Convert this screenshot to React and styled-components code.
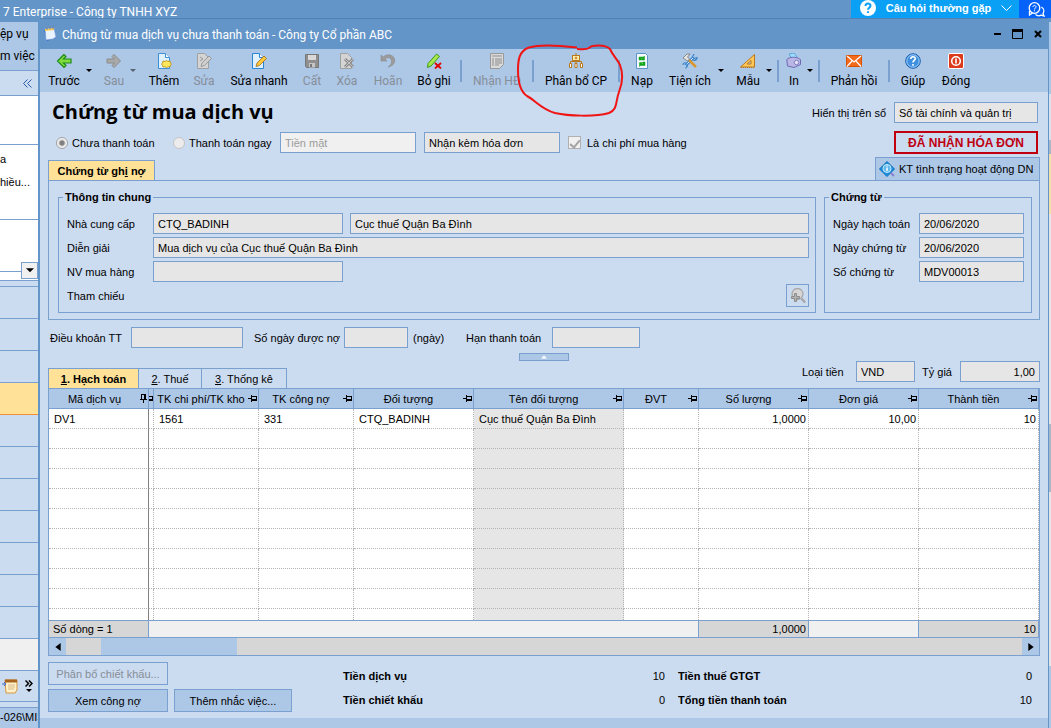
import styled, { createGlobalStyle, css, ThemeProvider } from "styled-components"

const theme = {
    colors: {
        window: "#6495c8",
        bar: "#adc7e7",
        panel: "#cbdbf0",
        line: "#7aa0cf",
        field: "#e6e6e6",
        active: "#ffe297",
        danger: "#c00010",
        muted: "#868e98",
    },
    fonts: {
        form: '"Liberation Sans", Arial, sans-serif',
        window: 'Roboto, "Open Sans", sans-serif',
        heading: '"Open Sans", "Noto Sans", sans-serif',
    },
}

const columns = [
    { title: "Mã dịch vụ", width: 100, value: "DV1", frozen: true },
    { title: "", width: 5, narrow: true },
    { title: "TK chi phí/TK kho", width: 105, value: "1561" },
    { title: "TK công nợ", width: 95, value: "331" },
    { title: "Đối tượng", width: 120, value: "CTQ_BADINH" },
    { title: "Tên đối tượng", value: "Cục thuế Quận Ba Đình", shaded: true },
    { title: "ĐVT", width: 75 },
    { title: "Số lượng", width: 110, value: "1,0000", numeric: true },
    { title: "Đơn giá", width: 110, value: "10,00", numeric: true },
    { title: "Thành tiền", width: 120, value: "10", numeric: true },
]

const tools = [
    { label: "Trước", icon: "back", width: 44, menu: true },
    { label: "Sau", icon: "forward", width: 32, menu: true, disabled: true },
    { label: "Thêm", icon: "add", width: 44 },
    { label: "Sửa", icon: "editOff", width: 36, disabled: true },
    { label: "Sửa nhanh", icon: "edit", width: 74 },
    { label: "Cất", icon: "save", width: 32, disabled: true },
    { label: "Xóa", icon: "remove", width: 38, disabled: true },
    { label: "Hoãn", icon: "undo", width: 44, disabled: true },
    { label: "Bỏ ghi", icon: "unpost", width: 48, separated: true },
    { label: "Nhận HĐ", icon: "invoice", width: 66, disabled: true, separated: true },
    { label: "Phân bổ CP", icon: "allocate", width: 80, marked: true, separated: true },
    { label: "Nạp", icon: "reload", width: 40 },
    { label: "Tiện ích", icon: "utils", width: 56, menu: true },
    { label: "Mẫu", icon: "template", width: 36, menu: true, separated: true },
    { label: "In", icon: "print", width: 26, menu: true, separated: true },
    { label: "Phản hồi", icon: "mail", width: 64, separated: true },
    { label: "Giúp", icon: "help", width: 42 },
    { label: "Đóng", icon: "close", width: 44 },
]

const icons = {
    back: (
        <path d="M8 1.5 1.5 8 8 14.5l2-2L7.5 10H15V6H7.5L10 3.500z" fill="#7fdc3a" stroke="#1f8a1c" strokeWidth="1.200" />
    ),
    forward: (
        <path d="M8 1.5 14.500 8 8 14.5l-2-2L8.500 10H1V6h7.500L6 3.500z" fill="#a9a9a9" stroke="#8a8a8a" />
    ),
    add: (
        <>
            <path d="M2.500.5h7l4 4v11h-11z" fill="#dff0ff" stroke="#3b8fd4" />
            <path d="M9.500.5v4h4" fill="#fff" stroke="#3b8fd4" />
            <path d="m10.500 7.500 1.500 1 2-.5.500 2 1 1-1 1.500-.5 1.500-2-.3-1.500 1-1.500-1-2 .3-.5-1.500-1-1.500 1-1 .5-2 2 .5z" fill="#ffe75a" stroke="#b28a10" strokeWidth=".8" />
        </>
    ),
    edit: (
        <>
            <path d="M1.500.5h7l4 4v11h-11z" fill="#dff0ff" stroke="#2a86d0" />
            <path d="M8.500.5v4h4" fill="#fff" stroke="#2a86d0" />
            <path d="m6 10 7-7 2.500 2.500-7 7-3.500 1z" fill="#ffc83a" stroke="#9a6a20" strokeWidth=".8" />
        </>
    ),
    editOff: (
        <>
            <path d="M1.500.5h7l4 4v11h-11z" fill="#d4d4d4" stroke="#a0a0a0" />
            <path d="m4 4 3 2-3 2" fill="none" stroke="#999" />
            <path d="m6 10 7-7 2.500 2.500-7 7-3.500 1z" fill="#cfcfcf" stroke="#8c8c8c" strokeWidth=".8" />
        </>
    ),
    save: (
        <>
            <path d="M1.500 1.500h13v13h-12l-1-1z" fill="#8f8f8f" stroke="#777" />
            <path d="M4 2h8v5H4z" fill="#d9d9d9" />
            <path d="M5 10h6v4.500H5z" fill="#c6c6c6" />
            <path d="M6 11h2v3H6z" fill="#777" />
        </>
    ),
    remove: (
        <>
            <path d="M1.500.5h7l4 4v11h-11z" fill="#d4d4d4" stroke="#a0a0a0" />
            <path d="m6 6 8 8M14 6l-8 8" stroke="#8c8c8c" strokeWidth="3" />
            <path d="m6 6 8 8M14 6l-8 8" stroke="#c4c4c4" />
        </>
    ),
    undo: (
        <path d="M1 2v6h6L4.800 5.800C8 3.500 12 5 11.500 9c-.2 2-1.500 3.500-3.500 5 4-.8 7-3 6.700-7C14.500 2.500 8-.5 3.200 4z" fill="#9b9b9b" stroke="#8a8a8a" strokeWidth=".6" />
    ),
    unpost: (
        <>
            <path d="m2 10.500 8.500-9.500 3 2.500L5 13l-3.500 1.500z" fill="#a6e64a" stroke="#3d9a1c" />
            <path d="m9 10 6 5.500M15 10l-6 5.500" stroke="#e00000" strokeWidth="1.800" />
        </>
    ),
    invoice: (
        <>
            <path d="M1.500.5h13v11l-4 4h-9z" fill="#dadada" stroke="#999" />
            <path d="M3 3h10M3 6h2m1 0h7M3 8h2m1 0h7M3 10h2m1 0h7M3 12h2m1 0h4" stroke="#8d8d8d" />
        </>
    ),
    allocate: (
        <>
            <path d="M8 0v3M2.500 11V8.500h11V11M8 8v3" fill="none" stroke="#b9781e" />
            <rect x="4.500" y="2.500" width="7" height="5" fill="#fff3b0" stroke="#b9781e" />
            <path d="M8 3.500v3M6.500 5h3" stroke="#b9781e" />
            <path d="M1.500 10.500h2v4h-2zM7 10.500h2v4H7zM12.500 10.500h2v4h-2z" fill="#fff" stroke="#b9781e" />
        </>
    ),
    reload: (
        <>
            <path d="M2.500.5h9l2 2v13h-11z" fill="#f4f9ff" stroke="#5b93c9" />
            <path d="M5 7V4h4.500l1-1v4H7l1.500-1.500H7V7zM11 9v3.500H6.500l-1 1v-4H9L7.500 11H9V9z" fill="#13a51b" stroke="#13a51b" strokeWidth=".5" />
        </>
    ),
    utils: (
        <>
            <path d="m3.500 12.500 8-8" stroke="#3f86c8" strokeWidth="3" />
            <path d="m3.500 12.500 8-8" stroke="#d7ecff" />
            <path d="M12 1 10.500 4l1.500 1.500 3-1c.3 2-2 3.500-4 2.500M1 12c0-2 2-3 3.500-1.500S5.500 15 3 15" fill="none" stroke="#3f86c8" strokeWidth="1.200" />
            <path d="m7 7 7 7" stroke="#d9972e" strokeWidth="2.500" />
            <path d="m1 5 4-4h3L5.500 4l2 2-2 2z" fill="#e4e4e4" stroke="#777" strokeWidth=".8" />
        </>
    ),
    template: (
        <>
            <path d="M14.500 1.500v12.500H.5z" fill="#ffc65a" stroke="#b87a1c" />
            <path d="M11 7.500V11H7z" fill="#adc7e7" stroke="#b87a1c" />
            <path d="M1 14.500h13" stroke="#b87a1c" strokeDasharray="1 1" />
        </>
    ),
    print: (
        <>
            <path d="m3 1 5-1 3 4-5 2z" fill="#9fdcff" stroke="#4a9ad0" strokeWidth=".8" />
            <path d="M.8 6.500C3 4 10 3 14.500 6.500v5L8 14.500 1.500 13z" fill="#b9b6e6" stroke="#6f6bb3" />
            <circle cx="10.500" cy="9.500" r="2.200" fill="#e6e4fa" stroke="#6f6bb3" strokeWidth=".8" />
        </>
    ),
    mail: (
        <>
            <path d="M.5 2.500h15v11H.5z" fill="#f36a1c" stroke="#d85204" />
            <path d="m1 3 7 6 7-6M1 13.500 6 8M15 13.500 10 8" fill="none" stroke="#fff" strokeWidth="1.200" />
        </>
    ),
    help: (
        <>
            <circle cx="8" cy="8" r="7.300" fill="#3d8fe0" stroke="#1c5fa8" />
            <circle cx="8" cy="8" r="6.200" fill="none" stroke="#b8dcff" strokeWidth=".8" />
            <path d="M5.800 6c0-3 4.500-3 4.500-.4C10.300 7.500 8 7.300 8 9.600M8 11v1.700" fill="none" stroke="#fff" strokeWidth="1.600" />
        </>
    ),
    close: (
        <>
            <rect x=".5" y=".5" width="15" height="15" rx="1.500" fill="#dc3a1c" stroke="#fff" />
            <circle cx="8" cy="8" r="4.300" fill="none" stroke="#fff" strokeWidth="1.600" />
            <path d="M8 5.500v5" stroke="#fff" strokeWidth="1.600" />
        </>
    ),
}

const Icon = ({ name }) => (
    <svg width="16" height="16" viewBox="0 0 16 16" aria-hidden="true">{icons[name]}</svg>
)

const PinIcon = () => (
    <svg width="9" height="7" viewBox="0 0 9 7" shapeRendering="crispEdges" aria-hidden="true">
        <path d="M0 3.500h3M3.500 0v7M4 1.500h4.500v4H4M4 4.500h4" fill="none" stroke="#000" />
    </svg>
)

const PinnedIcon = () => (
    <svg width="7" height="9" viewBox="0 0 7 9" shapeRendering="crispEdges" aria-hidden="true">
        <path d="M3.500 6v3M0 5.500h7M1.500 5V.5h4V5M4.500 1v4" fill="none" stroke="#000" />
    </svg>
)

const Caret = ({ d, size = 6 }) => (
    <svg width={size} height={size} viewBox="0 0 6 6" aria-hidden="true"><path d={d} /></svg>
)

const CARET_DOWN = "M0 1h6L3 4z"
const CARET_LEFT = "M5 0v6L1 3z"
const CARET_RIGHT = "M1 0v6l4-3z"

const Field = ({ id, label, ...props }) => (
    <>
        <label htmlFor={id}>{label}</label>
        <TextBox id={id} readOnly {...props} />
    </>
)

const Sidebar = () => (
    <SidebarWrapper>
        <SidebarMenu>
            <span>ệp vụ</span>
            <span>m việc</span>
        </SidebarMenu>
        <SidebarHead>
            <svg width="9" height="9" viewBox="0 0 9 9" aria-hidden="true">
                <path d="M4.500.5.5 4.500l4 4M8.500.5l-4 4 4 4" fill="none" stroke="#2d5da8" />
            </svg>
        </SidebarHead>
        <SidebarBlock $height={49} />
        <SidebarBlock $height={75}>
            <span>a</span>
            <span>hiều...</span>
        </SidebarBlock>
        <SidebarBlock $height={61}>
            <SidebarCombo>
                <SidebarDrop aria-label="Mở danh sách"><Caret d={CARET_DOWN} size={8} /></SidebarDrop>
            </SidebarCombo>
        </SidebarBlock>
        <SidebarGap />
        {Array.from({ length: 11 }, (_, i) => (
            <SidebarItem key={i} $active={i === 3} />
        ))}
        <SidebarItem $blank />
        <SidebarTray>
            <svg width="16" height="16" viewBox="0 0 16 16" aria-hidden="true">
                <path d="M3 2h12v10l-2 3H4z" fill="#fff1c8" stroke="#d8973e" />
                <path d="M3 1.500h12v3H3z" fill="#a8641f" />
                <path d="M0 6h4M2 4l2 2-2 2" stroke="#4a68c8" fill="none" />
                <path d="M6 7h7M6 9h7M6 11h6" stroke="#d8b98a" />
            </svg>
            <svg width="8" height="13" viewBox="0 0 8 13" aria-hidden="true">
                <path d="m.5.5 3 3-3 3M4 .5l3 3-3 3" fill="none" stroke="#000" strokeWidth="1.500" />
                <path d="M1 9h6l-3 3z" />
            </svg>
        </SidebarTray>
        <SidebarStatus>-026\MIS</SidebarStatus>
    </SidebarWrapper>
)

const Toolbar = () => (
    <ToolbarWrapper role="toolbar">
        {tools.map((tool) => (
            <ToolGroup key={tool.label}>
                <ToolButton $width={tool.width} disabled={tool.disabled}>
                    <Icon name={tool.icon} />
                    {tool.label}
                </ToolButton>
                {tool.menu && (
                    <ToolMenu aria-label={`${tool.label}: thêm`} disabled={tool.disabled}>
                        <Caret d={CARET_DOWN} />
                    </ToolMenu>
                )}
                {tool.separated && <Separator $tight={tool.menu} />}
                {tool.marked && (
                    <Mark width="112" height="80" viewBox="0 0 112 80" aria-hidden="true">
                        <path
                            d="M61 4.500C44 2.500 24 1 13 4.500 3 8 2 17 2 27c0 13 3 22 9 26 8 4 14 13 28 17 13 3 40 4 54 0 9-4 6-10 10-21 4-10 4-19 1-27C100 14 97 13 94 6c-5-5-19-4-21-1-3 2-7 1-12 1"
                            fill="none"
                            stroke="#f01414"
                            strokeWidth="2"
                        />
                    </Mark>
                )}
            </ToolGroup>
        ))}
    </ToolbarWrapper>
)

const DetailTable = () => (
    <Grid>
        <Table>
            <colgroup>
                {columns.map((column, i) => <Col key={i} $width={column.width} />)}
            </colgroup>
            <thead>
                <tr>
                    {columns.map((column, i) => (
                        <HeadCell key={i}>
                            <HeadContent $narrow={column.narrow}>
                                <span>{column.title}</span>
                                {column.frozen ? <PinnedIcon /> : <PinIcon />}
                            </HeadContent>
                        </HeadCell>
                    ))}
                </tr>
            </thead>
            <tbody>
                {Array.from({ length: 11 }, (_, row) => (
                    <BodyRow key={row} $short={row === 10}>
                        {columns.map((column, i) => (
                            <Cell key={i} $frozen={column.frozen} $shaded={column.shaded} $numeric={column.numeric}>
                                {row === 0 && column.value}
                            </Cell>
                        ))}
                    </BodyRow>
                ))}
            </tbody>
            <tfoot>
                <tr>
                    <TotalCell $filled>Số dòng = 1</TotalCell>
                    <TotalCell colSpan={6} />
                    <TotalCell $filled $numeric>1,0000</TotalCell>
                    <TotalCell />
                    <TotalCell $filled $numeric>10</TotalCell>
                </tr>
            </tfoot>
        </Table>
        <ScrollBar>
            <ScrollButton aria-label="Cuộn trái"><Caret d={CARET_LEFT} size={8} /></ScrollButton>
            <ScrollTrack><ScrollThumb /></ScrollTrack>
            <ScrollButton aria-label="Cuộn phải"><Caret d={CARET_RIGHT} size={8} /></ScrollButton>
        </ScrollBar>
    </Grid>
)

const App = () => (
    <ThemeProvider theme={theme}>
        <GlobalStyle />
        <Page>
            <AppBar>
                <AppTitle>7 Enterprise - Công ty TNHH XYZ</AppTitle>
                <FaqButton>
                    <svg width="16" height="16" viewBox="0 0 16 16" aria-hidden="true">
                        <circle cx="8" cy="8" r="8" fill="#fff" />
                        <path d="M5.500 6c0-3.200 5-3.200 5-.2C10.500 7.800 8 7.500 8 9.800M8 11.300V13" fill="none" stroke="#0aa0f6" strokeWidth="2" />
                    </svg>
                    <span>Câu hỏi thường gặp</span>
                    <svg width="11" height="7" viewBox="0 0 11 7" aria-hidden="true">
                        <path d="m.5.5 5 5 5-5" fill="none" stroke="#fff" />
                    </svg>
                </FaqButton>
                <ChatButton aria-label="Trao đổi">
                    <svg width="17" height="15" viewBox="0 0 17 15" aria-hidden="true">
                        <circle cx="6.500" cy="6" r="5.300" fill="none" stroke="#fff" strokeWidth="1.300" />
                        <path d="M1.500 9v4l3-2M13.500 5c3 2 2.500 5 1.500 6.500l1 2.500-3-.8c-2 1-4 .6-5.500-.6" fill="none" stroke="#fff" strokeWidth="1.300" />
                        <path d="M5 5c0-2 3-2 3 0 0 1-1.500 1-1.500 2.500M6.500 8.300v1" fill="none" stroke="#fff" />
                    </svg>
                </ChatButton>
            </AppBar>

            <Workspace>
                <Sidebar />

                <Dialog>
                    <TitleBar>
                        <svg width="14" height="16" viewBox="0 0 14 16" aria-hidden="true">
                            <path d="m1 4 9-2 3 10-9 3z" fill="#3d68c8" />
                            <path d="m2 3 9-1 2 9-3 2-7 1z" fill="#e9f2ff" stroke="#6f95d8" strokeWidth=".6" />
                            <path d="m2 3 9-1v2l-9 1z" fill="#ffd24a" />
                            <path d="M4 1v3M7 .5v3M10 .5v3" stroke="#7c7c9c" />
                        </svg>
                        <TitleText>Chứng từ mua dịch vụ chưa thanh toán - Công ty Cổ phần ABC</TitleText>
                        <WindowButton aria-label="Thu nhỏ">
                            <svg width="8" height="10" viewBox="0 0 8 10"><path d="M0 5h7" stroke="#000" strokeWidth="2" /></svg>
                        </WindowButton>
                        <WindowButton aria-label="Phóng to">
                            <svg width="12" height="10" viewBox="0 0 12 10"><path d="M.5 1.500h10v8H.5z" fill="none" stroke="#000" /><path d="M0 1.500h11" stroke="#000" strokeWidth="3" /></svg>
                        </WindowButton>
                        <WindowButton aria-label="Đóng cửa sổ">
                            <svg width="8" height="8" viewBox="0 0 8 8"><path d="m1 1 6 6M7 1 1 7" stroke="#000" strokeWidth="2" /></svg>
                        </WindowButton>
                    </TitleBar>

                    <Toolbar />

                    <Content>
                        <HeadingRow>
                            <Heading>Chứng từ mua dịch vụ</Heading>
                            <Field id="book" label="Hiển thị trên sổ" $width={144} defaultValue="Sổ tài chính và quản trị" />
                        </HeadingRow>

                        <OptionsRow>
                            <Option $width={109}>
                                <Radio type="radio" name="payment" defaultChecked />
                                Chưa thanh toán
                            </Option>
                            <Option $width={99}>
                                <Radio type="radio" name="payment" disabled />
                                Thanh toán ngay
                            </Option>
                            <TextBox aria-label="Hình thức thanh toán" $width={136} disabled defaultValue="Tiền mặt" />
                            <TextBox aria-label="Hóa đơn" $width={136} readOnly defaultValue="Nhận kèm hóa đơn" />
                            <Option>
                                <CheckBox type="checkbox" defaultChecked />
                                Là chi phí mua hàng
                            </Option>
                            <InvoiceTag>ĐÃ NHẬN HÓA ĐƠN</InvoiceTag>
                        </OptionsRow>

                        <TabsRow>
                            <Tab $active $width={107}>Chứng từ gh<u>i</u> nợ</Tab>
                            <StatusButton>
                                <svg width="16" height="16" viewBox="0 0 16 16" aria-hidden="true">
                                    <path d="m8 .5 7.500 7.500-7.500 7.500L.5 8z" fill="#1c8fdc" stroke="#0f6fb8" />
                                    <circle cx="8" cy="7.500" r="4" fill="#5cb8ee" stroke="#cfeaff" />
                                    <path d="M8 6.500v3.500M8 4.500v1" stroke="#fff" strokeWidth="1.500" />
                                    <path d="m12 12 3 3" stroke="#8b7fd0" strokeWidth="2" />
                                </svg>
                                KT tình trạng hoạt động DN
                            </StatusButton>
                        </TabsRow>

                        <Panel>
                            <Group $grow>
                                <Legend>Thông tin chung</Legend>
                                <FormRow>
                                    <Field id="vendor" label="Nhà cung cấp" $width={190} defaultValue="CTQ_BADINH" />
                                    <TextBox aria-label="Tên nhà cung cấp" $grow readOnly defaultValue="Cục thuế Quận Ba Đình" />
                                </FormRow>
                                <FormRow>
                                    <Field id="note" label="Diễn giải" $grow defaultValue="Mua dịch vụ của Cục thuế Quận Ba Đình" />
                                </FormRow>
                                <FormRow>
                                    <Field id="buyer" label="NV mua hàng" $width={190} />
                                </FormRow>
                                <FormRow>
                                    <span>Tham chiếu</span>
                                    <SearchButton aria-label="Chọn tham chiếu" disabled>
                                        <svg width="16" height="16" viewBox="0 0 16 16" aria-hidden="true">
                                            <circle cx="7.500" cy="6" r="5.500" fill="#d6d6d6" stroke="#a8a8a8" strokeWidth="1.300" />
                                            <path d="m11.500 10.500 3.500 4" stroke="#a8a8a8" strokeWidth="2.500" />
                                            <path d="M4.500 5.500h2v3h3v2h-3v3h-2v-3h-3v-2h3z" fill="#b4b4b4" stroke="#8c8c8c" />
                                        </svg>
                                    </SearchButton>
                                </FormRow>
                            </Group>
                            <Group>
                                <Legend>Chứng từ</Legend>
                                <FormRow>
                                    <Field id="posted" label="Ngày hạch toán" $width={105} defaultValue="20/06/2020" />
                                </FormRow>
                                <FormRow>
                                    <Field id="dated" label="Ngày chứng từ" $width={105} defaultValue="20/06/2020" />
                                </FormRow>
                                <FormRow>
                                    <Field id="number" label="Số chứng từ" $width={105} defaultValue="MDV00013" />
                                </FormRow>
                            </Group>
                        </Panel>

                        <TermsRow>
                            <TermItem $label={81}>
                                <Field id="terms" label="Điều khoản TT" $width={112} />
                            </TermItem>
                            <TermItem $label={90}>
                                <Field id="days" label="Số ngày được nợ" $width={64} />
                                <Unit>(ngày)</Unit>
                            </TermItem>
                            <TermItem $label={86}>
                                <Field id="due" label="Hạn thanh toán" $width={88} />
                            </TermItem>
                        </TermsRow>

                        <CollapseButton aria-label="Thu gọn">
                            <svg width="6" height="4" viewBox="0 0 6 4" aria-hidden="true"><path d="M0 3.500h6l-3-3z" fill="#fff" /></svg>
                        </CollapseButton>

                        <DetailBar>
                            <Tab $active $width={91}><u>1</u>. Hạch toán</Tab>
                            <Tab $width={63}><u>2</u>. Thuế</Tab>
                            <Tab $width={85}><u>3</u>. Thống kê</Tab>
                            <Currency>
                                <TermItem $label={54}>
                                    <Field id="currency" label="Loại tiền" $width={59} defaultValue="VND" />
                                </TermItem>
                                <TermItem $label={38}>
                                    <Field id="rate" label="Tỷ giá" $width={80} $right defaultValue="1,00" />
                                </TermItem>
                            </Currency>
                        </DetailBar>

                        <DetailTable />

                        <Footer>
                            <Actions>
                                <ActionButton disabled>Phân bổ chiết khấu...</ActionButton>
                                <span />
                                <ActionButton>Xem công nợ</ActionButton>
                                <ActionButton>Thêm nhắc việc...</ActionButton>
                            </Actions>
                            <Totals>
                                <Total><dt>Tiền dịch vụ</dt><dd>10</dd></Total>
                                <Total><dt>Tiền thuế GTGT</dt><dd>0</dd></Total>
                                <Total><dt>Tiền chiết khấu</dt><dd>0</dd></Total>
                                <Total><dt>Tổng tiền thanh toán</dt><dd>10</dd></Total>
                            </Totals>
                        </Footer>
                    </Content>
                </Dialog>

                <Backdrop />
            </Workspace>
        </Page>
    </ThemeProvider>
)

export default App

const GlobalStyle = createGlobalStyle`
    * {
        box-sizing: border-box;
    }
    body {
        margin: 0;
        font: 11px/14px ${theme.fonts.form};
        color: #000;
    }
    button, input {
        font: inherit;
        color: inherit;
        margin: 0;
        padding: 0;
        border: 0;
        background: none;
    }
    svg {
        flex: none;
        display: block;
    }
`

const Page = styled.div`
    min-height: 100vh;
    display: flex;
    flex-direction: column;
    overflow: hidden;
    background: ${({ theme }) => theme.colors.window};
`

const AppBar = styled.header`
    display: flex;
    height: 18px;
    color: white;
`

const AppTitle = styled.div`
    margin-right: auto;
    padding: 3px 0 0 3px;
    white-space: nowrap;
    font: 12px/18px ${({ theme }) => theme.fonts.window};
`

const FaqButton = styled.button`
    width: 168px;
    display: flex;
    align-items: center;
    justify-content: space-between;
    padding: 0 7px 2px 9px;
    background: #0aa0f6;
    font-weight: bold;
`

const ChatButton = styled.button`
    width: 32px;
    padding-left: 9px;
    background: #0563fa;
`

const Workspace = styled.div`
    flex: 1;
    display: flex;
`

const SidebarWrapper = styled.aside`
    width: 38px;
    flex: none;
    margin-top: 4px;
    display: flex;
    flex-direction: column;
    background: ${({ theme }) => theme.colors.panel};
`

const SidebarMenu = styled.div`
    height: 48px;
    display: flex;
    flex-direction: column;
    padding-top: 1px;
    white-space: nowrap;
    background: ${({ theme }) => theme.colors.bar};
    font: 12px/22px ${({ theme }) => theme.fonts.window};
`

const SidebarHead = styled.div`
    height: 26px;
    display: flex;
    align-items: center;
    justify-content: flex-end;
    padding-right: 6px;
    border: solid ${({ theme }) => theme.colors.line};
    border-width: 1px 0;
`

const SidebarBlock = styled.div`
    height: ${({ $height }) => $height}px;
    display: flex;
    flex-direction: column;
    gap: 9px;
    padding-top: 7px;
    white-space: nowrap;
    background: white;
    border-bottom: 1px solid ${({ theme }) => theme.colors.line};
`

const SidebarCombo = styled.div`
    margin-top: auto;
    padding-bottom: 1px;
    display: flex;
    justify-content: flex-end;
    background: linear-gradient(${({ theme }) => theme.colors.line}, ${({ theme }) => theme.colors.line}) 0 9px / 100% 1px no-repeat;
`

const SidebarDrop = styled.button`
    width: 17px;
    height: 17px;
    display: grid;
    place-items: center;
    background: #f0f0f0;
    border: 1px solid ${({ theme }) => theme.colors.line};
`

const SidebarGap = styled.div`
    height: 6px;
    border-bottom: 1px solid ${({ theme }) => theme.colors.line};
`

const SidebarItem = styled.div`
    height: 32px;
    border-bottom: 1px solid ${({ theme, $active }) => $active ? "#f2903a" : theme.colors.line};
    background: ${({ theme, $active, $blank }) => $active ? theme.colors.active : $blank ? "#f0f0f0" : theme.colors.panel};
`

const SidebarTray = styled.div`
    height: 31px;
    display: flex;
    align-items: center;
    justify-content: flex-end;
    gap: 7px;
    padding-right: 5px;
    border-bottom: 1px solid ${({ theme }) => theme.colors.line};
`

const SidebarStatus = styled.div`
    flex: 1;
    margin-top: 5px;
    padding-top: 2px;
    white-space: nowrap;
    background: ${({ theme }) => theme.colors.bar};
    border-top: 1px solid ${({ theme }) => theme.colors.line};
`

const Dialog = styled.main`
    position: relative;
    flex: 1;
    min-width: 0;
    display: flex;
    flex-direction: column;
    background: ${({ theme }) => theme.colors.bar};
    border: solid ${({ theme }) => theme.colors.window};
    border-width: 0 1px 0 2px;
`

const TitleBar = styled.div`
    height: 31px;
    display: flex;
    align-items: center;
    padding-left: 3px;
    background: ${({ theme }) => theme.colors.window};
    border-top: 1px solid #5480b4;
`

const TitleText = styled.div`
    flex: 1;
    padding: 2px 0 0 5px;
    color: white;
    font: 12px/16px ${({ theme }) => theme.fonts.window};
    white-space: nowrap;
`

const WindowButton = styled.button`
    width: 20px;
    display: flex;
    justify-content: center;
`

const ToolbarWrapper = styled.div`
    height: 43px;
    display: flex;
    padding-left: 2px;
    background: ${({ theme }) => theme.colors.bar};
`

const ToolGroup = styled.div`
    position: relative;
    display: flex;
    align-items: center;
`

const ToolButton = styled.button`
    width: ${({ $width }) => $width}px;
    display: flex;
    flex-direction: column;
    align-items: center;
    gap: 4px;
    white-space: nowrap;
    font: 12px/16px ${({ theme }) => theme.fonts.window};

    &:disabled {
        color: ${({ theme }) => theme.colors.muted};
    }
`

const ToolMenu = styled.button`
    width: 6px;
    margin-right: 6px;

    &:disabled {
        opacity: 0.5;
    }
`

const Separator = styled.div`
    width: 6px;
    height: 22px;
    margin-left: ${({ $tight }) => $tight ? "-3px" : "0"};
    background: linear-gradient(${({ theme }) => theme.colors.line}, ${({ theme }) => theme.colors.line}) center / 2px 100% no-repeat;
`

const Mark = styled.svg`
    position: absolute;
    left: -20px;
    top: -6px;
    z-index: 1;
    pointer-events: none;
`

const Content = styled.div`
    padding: 10px 8px 6px;
    background: ${({ theme }) => theme.colors.panel};
`

const TextBox = styled.input`
    width: ${({ $width }) => $width ? `${$width}px` : "auto"};
    height: 21px;
    min-width: 0;
    padding: 0 4px;
    background: ${({ theme }) => theme.colors.field};
    border: 1px solid ${({ theme }) => theme.colors.line};
    text-align: ${({ $right }) => $right ? "right" : "left"};
    ${({ $grow }) => $grow && css`
        flex: 1;
    `}

    &:disabled {
        background: #f0f0f0;
        color: #9c9c9c;
    }
`

const HeadingRow = styled.div`
    display: flex;
    align-items: center;
    gap: 8px;
    height: 21px;
    padding-right: 2px;
`

const Heading = styled.h1`
    margin: 0 auto 2px 4px;
    font: bold 20px/20px ${({ theme }) => theme.fonts.heading};
`

const OptionsRow = styled.div`
    display: flex;
    align-items: center;
    gap: 8px;
    margin-top: 8px;
    height: 23px;
    padding: 0 2px 0 8px;
`

const Option = styled.label`
    width: ${({ $width }) => $width ? `${$width}px` : "auto"};
    display: flex;
    align-items: center;
    gap: 4px;
    white-space: nowrap;
`

const Radio = styled.input`
    appearance: none;
    width: 12px;
    height: 12px;
    border-radius: 50%;
    border: 1px solid #a0a0a0;
    background: #f0f0f0;

    &:checked {
        background: radial-gradient(circle, #808080 0 2px, #c8c8c8 3px, #f4f4f4 4px);
    }
    &:disabled {
        border-color: #c4c4c4;
        background: #ececec;
    }
`

const CheckBox = styled.input`
    appearance: none;
    width: 13px;
    height: 13px;
    margin-right: 2px;
    display: grid;
    place-items: center;
    border: 1px solid #b0b0b0;
    background: #f0f0f0;

    &:checked::before {
        content: "";
        width: 4px;
        height: 8px;
        border: solid #a4a4a4;
        border-width: 0 2px 2px 0;
        transform: rotate(40deg);
    }
`

const InvoiceTag = styled.div`
    width: 144px;
    height: 23px;
    margin-left: auto;
    display: grid;
    place-items: center;
    border: 2px solid ${({ theme }) => theme.colors.danger};
    color: ${({ theme }) => theme.colors.danger};
    font-size: 12px;
    font-weight: bold;
    white-space: nowrap;
`

const TabsRow = styled.div`
    display: flex;
    align-items: flex-end;
    justify-content: space-between;
    margin-top: 3px;
`

const Tab = styled.button`
    width: ${({ $width }) => $width}px;
    height: 20px;
    white-space: nowrap;
    border: solid ${({ theme }) => theme.colors.line};
    border-width: 1px 1px 0 0;
    background: ${({ theme }) => theme.colors.panel};
    ${({ $active }) => $active && css`
        border-left-width: 1px;
        background: ${({ theme }) => theme.colors.active};
        font-weight: bold;
    `}
`

const StatusButton = styled.button`
    width: 165px;
    height: 23px;
    display: flex;
    align-items: center;
    gap: 4px;
    padding-left: 3px;
    white-space: nowrap;
    background: ${({ theme }) => theme.colors.bar};
    border: 1px solid ${({ theme }) => theme.colors.line};
    border-bottom: 0;
`

const Panel = styled.section`
    display: flex;
    gap: 8px;
    padding: 9px 7px 6px 9px;
    border: 1px solid ${({ theme }) => theme.colors.line};
`

const Group = styled.fieldset`
    flex: ${({ $grow }) => $grow ? "1" : "0 0 208px"};
    min-width: 0;
    margin: 0;
    padding: 9px 6px 6px 4px;
    border: 1px solid ${({ theme }) => theme.colors.line};
`

const Legend = styled.legend`
    padding: 0 2px;
    font-weight: bold;
`

const FormRow = styled.div`
    display: flex;
    align-items: center;
    height: 21px;
    padding-left: 4px;

    & + & {
        margin-top: 3px;
    }
    label {
        flex: 0 0 86px;
    }
    input + input {
        margin-left: 7px;
    }
`

const SearchButton = styled.button`
    width: 23px;
    height: 23px;
    margin-left: auto;
    display: grid;
    place-items: center;
    border: 1px solid ${({ theme }) => theme.colors.line};
`

const TermsRow = styled.div`
    display: flex;
    gap: 11px;
    margin-top: 7px;
    padding-left: 2px;
`

const TermItem = styled.div`
    display: flex;
    align-items: center;
    white-space: nowrap;

    label {
        width: ${({ $label }) => $label}px;
    }
`

const Unit = styled.span`
    width: 47px;
    padding-left: 5px;
`

const CollapseButton = styled.button`
    width: 50px;
    height: 8px;
    display: grid;
    place-items: center;
    margin: 5px auto 0;
    background: ${({ theme }) => theme.colors.bar};
    border: 1px solid ${({ theme }) => theme.colors.line};
`

const DetailBar = styled.div`
    display: flex;
    align-items: flex-end;
    height: 27px;
`

const Currency = styled.div`
    display: flex;
    gap: 7px;
    margin-left: auto;
    align-self: flex-start;
`

const Grid = styled.div`
    border: 1px solid ${({ theme }) => theme.colors.line};
    background: white;
`

const Table = styled.table`
    width: 100%;
    table-layout: fixed;
    border-collapse: separate;
    border-spacing: 0;
`

const Col = styled.col`
    width: ${({ $width }) => $width ? `${$width}px` : "auto"};
`

const HeadCell = styled.th`
    height: 20px;
    padding: 0;
    overflow: hidden;
    font-weight: normal;
    background: ${({ theme }) => theme.colors.bar};
    border: solid ${({ theme }) => theme.colors.line};
    border-width: 0 1px 1px 0;
`

const HeadContent = styled.div`
    display: flex;
    align-items: center;
    justify-content: flex-end;
    padding-right: ${({ $narrow }) => $narrow ? "0" : "1px"};
    overflow: hidden;
    white-space: nowrap;

    span {
        flex: ${({ $narrow }) => $narrow ? "none" : "1"};
    }
`

const BodyRow = styled.tr`
    height: ${({ $short }) => $short ? 11 : 20}px;
`

const Cell = styled.td`
    padding: 0 ${({ $numeric }) => $numeric ? "2px" : "0"} 0 5px;
    line-height: 10px;
    text-align: ${({ $numeric }) => $numeric ? "right" : "left"};
    white-space: nowrap;
    background: ${({ theme, $shaded }) => $shaded ? theme.colors.field : "white"};
    border: dotted #b4b4b4;
    border-width: 0 1px 1px 0;
    ${({ $frozen }) => $frozen && css`
        border-right: 1px solid #808080;
    `}

    ${BodyRow}:last-child & {
        border-bottom: 0;
    }
`

const TotalCell = styled.td`
    height: 18px;
    padding: 0 ${({ $numeric }) => $numeric ? "2px" : "0"} 0 4px;
    text-align: ${({ $numeric }) => $numeric ? "right" : "left"};
    background: ${({ $filled }) => $filled ? "#d6d6d6" : "#f0f0f0"};
    border: solid ${({ theme }) => theme.colors.line};
    border-width: 1px 1px 1px 0;
`

const ScrollBar = styled.div`
    display: flex;
    height: 17px;
`

const ScrollButton = styled.button`
    width: 17px;
    display: grid;
    place-items: center;
    background: ${({ theme }) => theme.colors.bar};
`

const ScrollTrack = styled.div`
    flex: 1;
    padding-left: 35px;
    background: #d6d6d6;
`

const ScrollThumb = styled.div`
    width: 136px;
    height: 100%;
    background: ${({ theme }) => theme.colors.bar};
`

const Footer = styled.footer`
    display: flex;
    gap: 51px;
    margin-top: 6px;
`

const Actions = styled.div`
    display: grid;
    grid-template-columns: 120px 118px;
    gap: 4px 6px;
`

const ActionButton = styled.button`
    height: 23px;
    background: ${({ theme }) => theme.colors.bar};
    border: 1px solid ${({ theme }) => theme.colors.line};

    &:disabled {
        background: ${({ theme }) => theme.colors.panel};
        color: ${({ theme }) => theme.colors.muted};
    }
`

const Totals = styled.dl`
    flex: 1;
    display: grid;
    grid-template-columns: 322fr 354fr;
    gap: 0 13px;
    align-content: center;
    margin: 2px 8px 0 0;
`

const Total = styled.div`
    display: flex;
    justify-content: space-between;
    line-height: 24px;

    dt {
        font-weight: bold;
    }
    dd {
        margin: 0;
    }
`

const Backdrop = styled.div`
    width: 2px;
    margin-top: 4px;
    background: linear-gradient(#adc7e7 0 72px, #d8e2ee 72px 118px, #a8b8cc 118px 132px, #f5dfa8 132px 192px, #e4e6e8 192px 402px, #a8b8cc 402px 470px, #e4e6e8 470px 644px, #adc7e7 644px);
`
